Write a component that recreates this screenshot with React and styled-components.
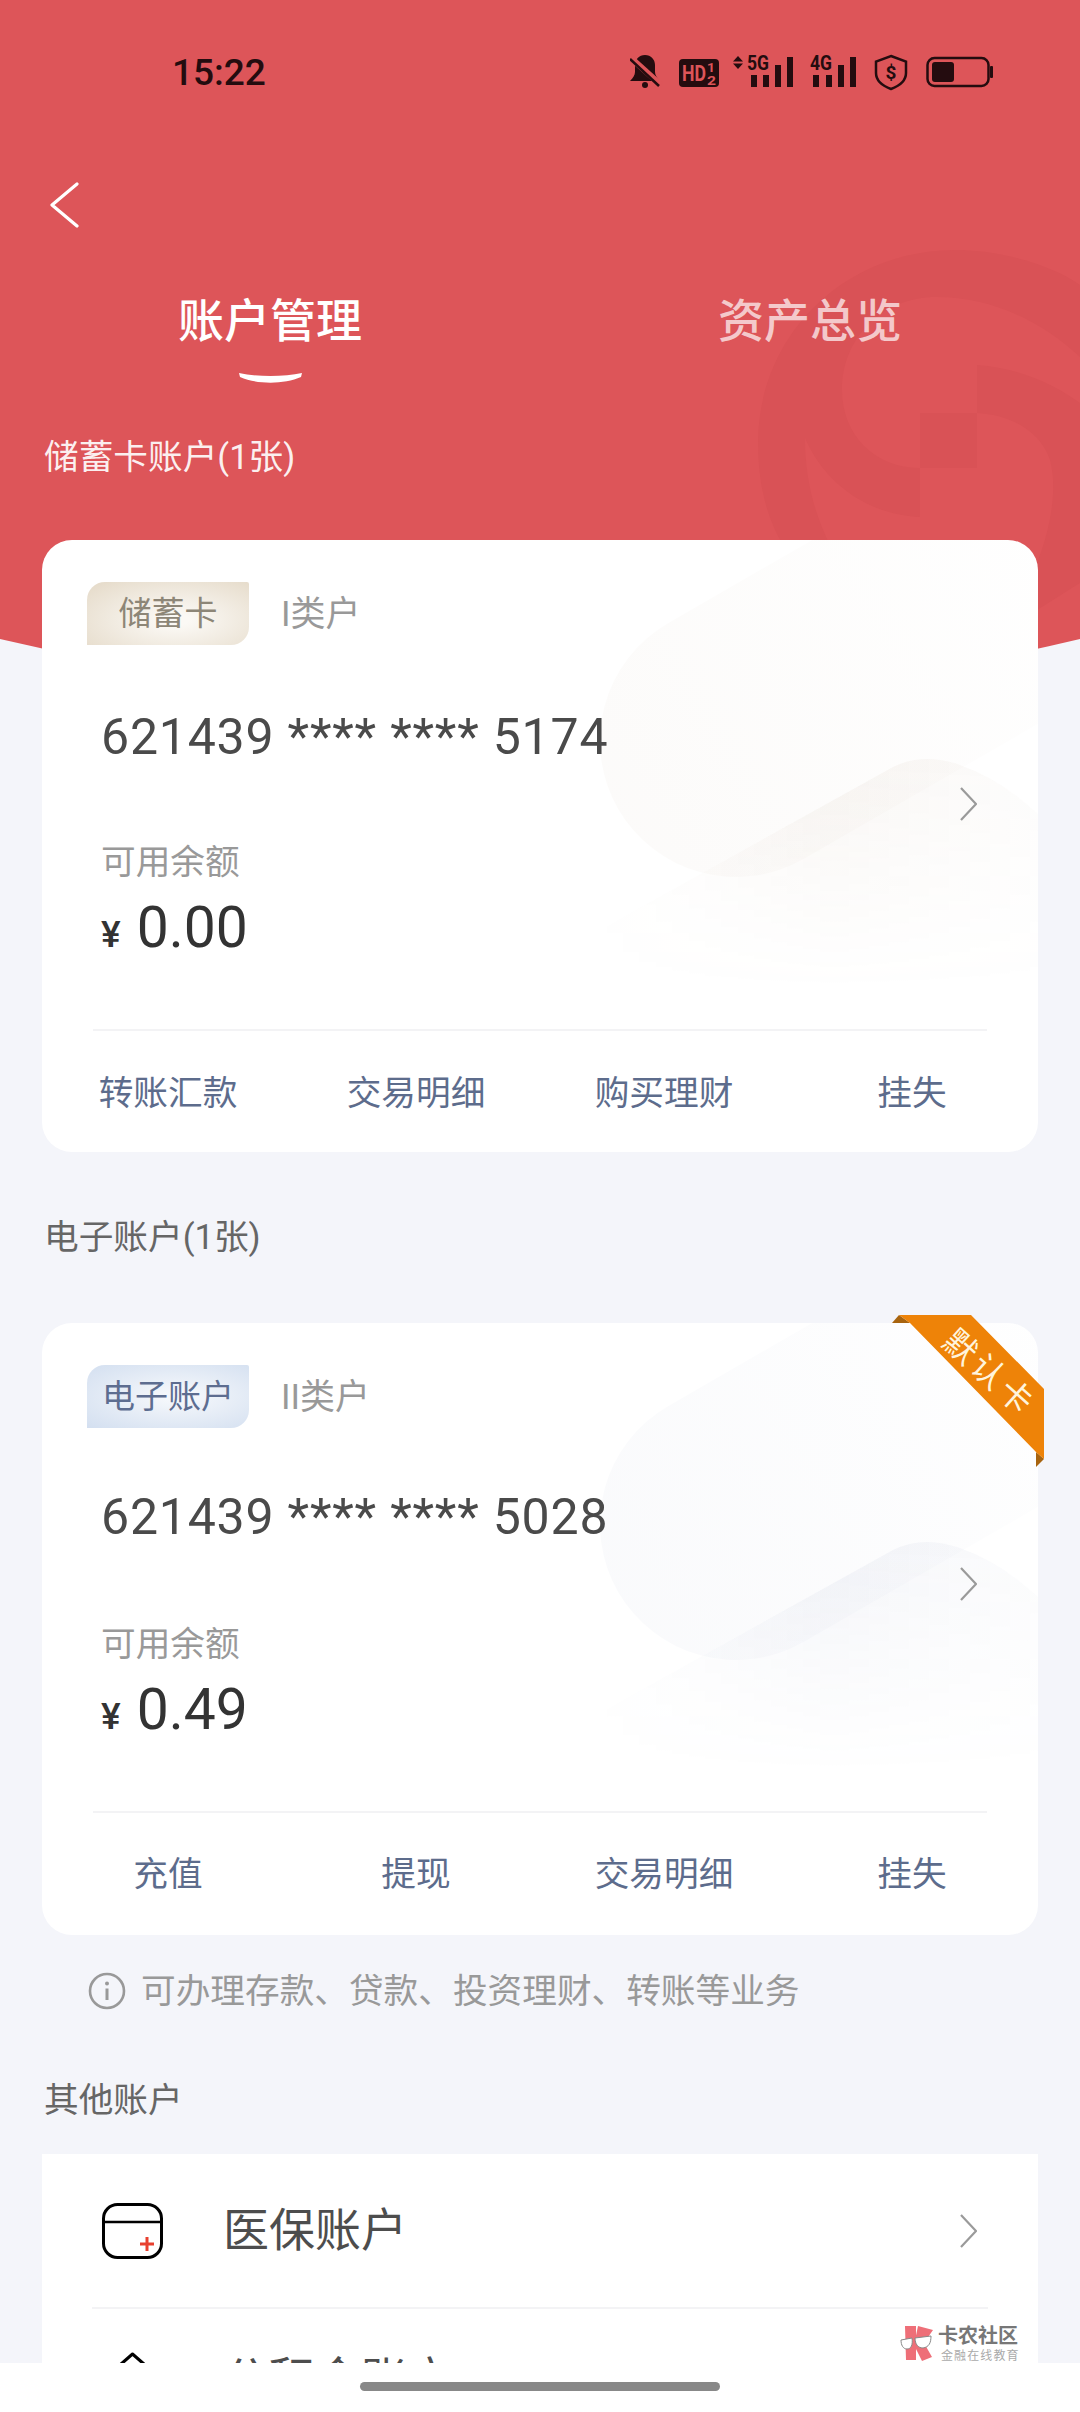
import React from "react";
import styled, {createGlobalStyle} from "styled-components";

const GlobalStyle = createGlobalStyle`
  html, body {
    margin: 0;
    padding: 0;
    background: #f4f5fa;
  }
  * {
    box-sizing: border-box;
  }
`;

const FONT = `Roboto, "Noto Sans CJK SC", sans-serif`;
const STATUS_INK = "#240c0f";
const RED = "#dd5559";
const RED_DARK = "#d95256";

const Screen = styled.div`
  position: relative;
  width: 1080px;
  height: 2412px;
  overflow: hidden;
  background: #f4f5fa;
  font-family: ${FONT};
`;

const Backdrop = styled.svg`
  position: absolute;
  top: 0;
  left: 0;
  width: 1080px;
  height: 720px;
`;

const Content = styled.div`
  position: relative;
  display: flex;
  flex-direction: column;
`;

const StatusBar = styled.div`
  display: flex;
  align-items: center;
  justify-content: space-between;
  height: 144px;
  padding: 0 87px 0 172px;
`;

const Clock = styled.span`
  font-size: 37px;
  font-weight: 500;
  color: ${STATUS_INK};
`;

const StatusIcons = styled.div`
  display: flex;
  align-items: center;
`;

const StatusIcon = styled.svg`
  display: block;
  height: 44px;
  flex: none;
`;

const NavBar = styled.div`
  display: flex;
  align-items: center;
  height: 122px;
  padding-left: 49px;
`;

const Tabs = styled.div`
  display: flex;
  height: 124px;
  padding-top: 24px;
`;

const Tab = styled.div`
  flex: 1;
  display: flex;
  flex-direction: column;
  align-items: center;
  gap: 20px;
  font-size: 46px;
  font-weight: 500;
  line-height: 62px;
  color: ${(p) => (p.$active ? "#ffffff" : "rgba(255, 255, 255, 0.7)")};
`;

const SectionTitle = styled.div`
  padding: ${(p) => p.$top}px 44px ${(p) => p.$bottom}px;
  font-size: 34.67px;
  line-height: 44px;
  color: ${(p) => (p.$light ? "rgba(255, 255, 255, 0.92)" : "#666666")};
`;

const Card = styled.div`
  position: relative;
  display: flex;
  flex-direction: column;
  height: 612px;
  margin: 0 42px;
  border-radius: 30px;
  background: #ffffff;
`;

const CardArt = styled.svg`
  position: absolute;
  top: 0;
  left: 0;
  width: 996px;
  height: 612px;
  border-radius: 30px;
`;

const TagRow = styled.div`
  position: relative;
  display: flex;
  align-items: center;
  gap: 32px;
  margin: 42px 0 0 45px;
`;

const Tag = styled.div`
  display: flex;
  align-items: center;
  justify-content: center;
  width: 162px;
  height: 63px;
  padding-bottom: 5px;
  border-radius: 18px 2px 18px 0;
  font-size: 33px;
  color: ${(p) => (p.$tone === "blue" ? "#5d6d90" : "#8d8677")};
  background: ${(p) =>
    p.$tone === "blue"
        ? "radial-gradient(ellipse at 55% 50%, #f4f7fb 10%, #d3dff0 100%)"
        : "radial-gradient(ellipse at 55% 60%, #fbf9f5 10%, #e4d9c7 100%)"};
`;

const TagNote = styled.span`
  padding-bottom: 6px;
  font-size: 35px;
  color: #999999;
`;

const CardBody = styled.div`
  position: relative;
  display: flex;
  align-items: center;
  justify-content: space-between;
  padding: 0 61px 0 59px;
`;

const CardInfo = styled.div`
  display: flex;
  flex-direction: column;
`;

const CardNumber = styled.div`
  margin-top: ${(p) => (p.$tight ? 59 : 62)}px;
  font-size: 50px;
  line-height: 60px;
  letter-spacing: 0.8px;
  color: #4a4a4a;
`;

const BalanceLabel = styled.div`
  margin-top: ${(p) => (p.$tight ? 75 : 73)}px;
  font-size: 34.67px;
  line-height: 44px;
  color: #999999;
`;

const Balance = styled.div`
  display: flex;
  align-items: baseline;
  gap: 16px;
  margin-top: 12px;
  font-size: 57px;
  line-height: 64px;
  color: #333333;
`;

const Currency = styled.span`
  font-size: 37px;
  font-weight: 500;
`;

const CardChevron = styled.div`
  display: flex;
  margin-bottom: ${(p) => (p.$tight ? 10 : 4)}px;
`;

const CardDivider = styled.div`
  position: relative;
  height: 2px;
  margin: 62px 51px 0;
  background: #f3f3f5;
`;

const Actions = styled.div`
  position: relative;
  flex: 1;
  display: grid;
  grid-template-columns: repeat(4, 1fr);
  align-items: center;
  padding: 0 2px ${(p) => (p.$tight ? 7 : 4)}px;
`;

const Action = styled.div`
  text-align: center;
  font-size: 34.67px;
  color: #5d6c8c;
`;

const Ribbon = styled.div`
  position: absolute;
  top: -8px;
  right: -6px;
  width: 152px;
  height: 152px;
`;

const RibbonShape = styled.svg`
  display: block;
`;

const RibbonText = styled.span`
  position: absolute;
  top: 28px;
  left: 44px;
  width: 92px;
  text-align: center;
  font-size: 33px;
  line-height: 48px;
  letter-spacing: 4px;
  white-space: nowrap;
  color: #fff4dc;
  transform: rotate(42deg);
`;

const Notice = styled.div`
  display: flex;
  align-items: center;
  gap: 14px;
  margin-top: 34px;
  padding-left: 87px;
  font-size: 34.67px;
  line-height: 44px;
  color: #999999;
`;

const Panel = styled.div`
  margin: 0 42px;
  background: #ffffff;
`;

const Row = styled.div`
  display: flex;
  align-items: center;
  height: ${(p) => p.$height}px;
  padding: 0 61px 0 60px;
`;

const RowLabel = styled.span`
  flex: 1;
  margin: 0 0 9px 60px;
  font-size: 46px;
  color: #4d4d4d;
`;

const RowDivider = styled.div`
  height: 2px;
  margin: 0 50px 0 50px;
  background: #f3f3f5;
`;

const HomeBar = styled.div`
  position: absolute;
  left: 0;
  right: 0;
  bottom: 0;
  display: flex;
  justify-content: center;
  height: 49px;
  padding-top: 19px;
  background: #ffffff;
`;

const HomeHandle = styled.div`
  width: 360px;
  height: 9px;
  border-radius: 5px;
  background: #888888;
`;

const Watermark = styled.div`
  position: absolute;
  left: 900px;
  top: 2325px;
  display: flex;
  gap: 4px;
`;

const WatermarkText = styled.div`
  display: flex;
  flex-direction: column;
  gap: 3px;
`;

const WatermarkName = styled.span`
  font-size: 20px;
  line-height: 22px;
  font-weight: 700;
  color: #777777;
`;

const WatermarkSlogan = styled.span`
  padding-left: 3px;
  font-size: 12px;
  line-height: 13px;
  letter-spacing: 1.1px;
  color: #aaaaaa;
`;

const Chevron = () => (
    <svg width="17" height="34" viewBox="0 0 17 34" fill="none">
        <path d="M1 1L16 17L1 33" stroke="#9a9a9a" strokeWidth="2.2"/>
    </svg>
);

const StatusGlyphs = () => (
    <StatusIcons>
        <StatusIcon viewBox="630 50 49 44" width="49">
            <path d="M645 55c-6 0-10 4.500-10 10v7c0 3-2 6-5 9h30c-3-3-5-6-5-9v-7c0-5.500-4-10-10-10z" fill={STATUS_INK}/>
            <circle cx="645" cy="85" r="3" fill={STATUS_INK}/>
            <path d="M631 58L661 85" stroke={RED} strokeWidth="6"/>
            <path d="M630 59L659 86" stroke={STATUS_INK} strokeWidth="2.5"/>
        </StatusIcon>
        <StatusIcon viewBox="679 50 54 44" width="54">
            <rect x="679" y="59" width="40" height="28" rx="4" fill={STATUS_INK}/>
            <text x="682" y="81" fontFamily="Roboto" fontWeight="700" fontSize="22" textLength="24" lengthAdjust="spacingAndGlyphs" fill={RED}>HD</text>
            <text x="707" y="72" fontFamily="Roboto" fontWeight="700" fontSize="13" textLength="8" lengthAdjust="spacingAndGlyphs" fill={RED}>1</text>
            <text x="707" y="85" fontFamily="Roboto" fontWeight="700" fontSize="13" textLength="9" lengthAdjust="spacingAndGlyphs" fill={RED}>2</text>
        </StatusIcon>
        <StatusIcon viewBox="733 50 77 44" width="77" fill={STATUS_INK}>
            <path d="M738 56L743 61.500H733Z"/>
            <path d="M738 69L743 63.500H733Z"/>
            <text x="747" y="70" fontFamily="Roboto" fontWeight="700" fontSize="20" textLength="22" lengthAdjust="spacingAndGlyphs">5G</text>
            <rect x="751" y="75" width="6" height="12"/>
            <rect x="763" y="75" width="6" height="12"/>
            <rect x="775" y="65" width="6" height="22"/>
            <rect x="787" y="57" width="6" height="30"/>
        </StatusIcon>
        <StatusIcon viewBox="810 50 64 44" width="64" fill={STATUS_INK}>
            <text x="810" y="70" fontFamily="Roboto" fontWeight="700" fontSize="20" textLength="22" lengthAdjust="spacingAndGlyphs">4G</text>
            <rect x="813" y="75" width="6" height="12"/>
            <rect x="826" y="75" width="6" height="12"/>
            <rect x="838" y="65" width="6" height="22"/>
            <rect x="850" y="57" width="6" height="30"/>
        </StatusIcon>
        <StatusIcon viewBox="874 50 52 44" width="52">
            <path d="M891 56L906 61.500V73C906 81 899 86 891 89C883 86 876 81 876 73V61.500Z" fill="none" stroke={STATUS_INK} strokeWidth="2.5"/>
            <text x="891" y="79" textAnchor="middle" fontFamily="Roboto" fontWeight="700" fontSize="19" fill={STATUS_INK}>$</text>
        </StatusIcon>
        <StatusIcon viewBox="926 50 67 44" width="67">
            <rect x="927.5" y="58" width="61" height="28" rx="7" fill="none" stroke={STATUS_INK} strokeWidth="2.5"/>
            <rect x="932" y="62" width="22" height="20" rx="3" fill={STATUS_INK}/>
            <rect x="990" y="66" width="3" height="12" rx="1" fill={STATUS_INK}/>
        </StatusIcon>
    </StatusIcons>
);

// red header with the bank mark pressed into it
const HeaderBackdrop = () => (
    <Backdrop viewBox="0 0 1080 720">
        <path d="M0 0H1080V639Q540 768 0 639Z" fill={RED}/>
        <g fill={RED_DARK}>
            <path d="M920 517C870 515 825 485 805 438C805 480 815 515 830 545H783C765 515 758 480 758 443C758 335 845 250 955 250C1010 250 1060 270 1080 285V357C1040 320 990 297 937 297C880 297 842 340 842 390C842 435 875 468 920 468Z"/>
            <path d="M920 413H977V468H920Z"/>
            <path d="M977 365C1020 368 1055 385 1080 403V583C1065 592 1050 602 1037 610V563C1050 530 1058 490 1050 460C1040 430 1010 415 977 413Z"/>
        </g>
    </Backdrop>
);

const CardDecoration = ({tone}) => {
    const rgb = tone === "blue" ? "70, 90, 150" : "150, 110, 70";
    const id = `fade-${tone}`;
    return (
        <CardArt viewBox="0 0 996 612">
            <defs>
                <linearGradient id={`${id}-pill`} x1="560" y1="300" x2="1000" y2="30" gradientUnits="userSpaceOnUse">
                    <stop offset="0" stopColor={`rgb(${rgb})`} stopOpacity="0.03"/>
                    <stop offset="1" stopColor={`rgb(${rgb})`} stopOpacity="0.004"/>
                </linearGradient>
                <linearGradient id={`${id}-wave`} x1="540" y1="0" x2="996" y2="0" gradientUnits="userSpaceOnUse">
                    <stop offset="0" stopColor={`rgb(${rgb})`} stopOpacity="0"/>
                    <stop offset="0.55" stopColor={`rgb(${rgb})`} stopOpacity="0.06"/>
                    <stop offset="1" stopColor={`rgb(${rgb})`} stopOpacity="0.02"/>
                </linearGradient>
                <linearGradient id={`${id}-drop`} x1="0" y1="222" x2="0" y2="450" gradientUnits="userSpaceOnUse">
                    <stop offset="0" stopColor="#ffffff"/>
                    <stop offset="1" stopColor="#000000"/>
                </linearGradient>
                <mask id={`${id}-mask`} maskUnits="userSpaceOnUse" x="0" y="0" width="996" height="612">
                    <rect x="0" y="200" width="996" height="260" fill={`url(#${id}-drop)`}/>
                </mask>
            </defs>
            <path d="M694 201L1190 -85" stroke={`url(#${id}-pill)`} strokeWidth="272" strokeLinecap="round" fill="none"/>
            <path d="M540 400L851 227Q881 212 918 225Q960 240 996 274V470H540Z" fill={`url(#${id}-wave)`} mask={`url(#${id}-mask)`}/>
        </CardArt>
    );
};

const DefaultRibbon = () => (
    <Ribbon>
        <RibbonShape width="152" height="152" viewBox="0 0 152 152">
            <path d="M0 8L7 0L18 8Z" fill="#a8640f"/>
            <path d="M144 137L152 144L144 152Z" fill="#a8640f"/>
            <path d="M7 0H79L152 74V144L144 137L18 8Z" fill="#ee8308"/>
        </RibbonShape>
        <RibbonText>默认卡</RibbonText>
    </Ribbon>
);

const AccountCard = ({tone, tag, note, number, balance, actions, tight, ribbon}) => (
    <Card>
        <CardDecoration tone={tone}/>
        <TagRow>
            <Tag $tone={tone}>{tag}</Tag>
            <TagNote>{note}</TagNote>
        </TagRow>
        <CardBody>
            <CardInfo>
                <CardNumber $tight={tight}>{number}</CardNumber>
                <BalanceLabel $tight={tight}>可用余额</BalanceLabel>
                <Balance>
                    <Currency>¥</Currency>
                    {balance}
                </Balance>
            </CardInfo>
            <CardChevron $tight={tight}>
                <Chevron/>
            </CardChevron>
        </CardBody>
        <CardDivider/>
        <Actions $tight={tight}>
            {actions.map((item) => <Action key={item}>{item}</Action>)}
        </Actions>
        {ribbon && <DefaultRibbon/>}
    </Card>
);

const InfoIcon = () => (
    <svg width="40" height="40" viewBox="0 0 40 40" fill="none">
        <circle cx="20" cy="20" r="17" stroke="#999999" strokeWidth="2.6"/>
        <circle cx="20" cy="12.500" r="2" fill="#999999"/>
        <path d="M20 17.500V29" stroke="#999999" strokeWidth="3"/>
    </svg>
);

const MedicalIcon = () => (
    <svg width="61" height="56" viewBox="0 0 61 56" fill="none">
        <rect x="1.5" y="1.5" width="58" height="53" rx="14" stroke="#000000" strokeWidth="3"/>
        <path d="M2 19H59" stroke="#000000" strokeWidth="2.5"/>
        <path d="M45 34V48M38 41H52" stroke="#e8402f" strokeWidth="3"/>
    </svg>
);

const HouseIcon = () => (
    <svg width="61" height="56" viewBox="0 0 61 56" fill="none">
        <path d="M2 27L30.5 2L59 27V54H2Z" stroke="#000000" strokeWidth="3" strokeLinejoin="round"/>
    </svg>
);

const WatermarkMark = () => (
    <svg width="34" height="36" viewBox="0 0 34 36">
        <path d="M5 1H16V35H6Z" fill="#ee6f78"/>
        <path d="M18 1L33 5L24 18L32 32L22 36L14 20Z" fill="#ee6f78"/>
        <path d="M1 15L12 13C13 20 11 24 7 24C3 24 1 20 1 15Z" fill="#ffffff" stroke="#888888" strokeWidth="1"/>
        <path d="M15 13L31 11C31 18 29 22 23 23C18 23 15 19 15 13Z" fill="#ffffff" stroke="#888888" strokeWidth="1"/>
    </svg>
);

export default function App() {
    return (
        <Screen>
            <GlobalStyle/>
            <HeaderBackdrop/>
            <Content>
                <StatusBar>
                    <Clock>15:22</Clock>
                    <StatusGlyphs/>
                </StatusBar>
                <NavBar>
                    <svg width="30" height="46" viewBox="0 0 30 46" fill="none">
                        <path d="M28 2L3 23L28 44" stroke="#ffffff" strokeWidth="3.2" strokeLinecap="round" strokeLinejoin="round"/>
                    </svg>
                </NavBar>
                <Tabs>
                    <Tab $active>
                        账户管理
                        <svg width="63" height="11" viewBox="0 0 63 11">
                            <path d="M0 1C18 5 45 5 63 1L62 5C45 12.500 18 12.500 1 5Z" fill="#ffffff"/>
                        </svg>
                    </Tab>
                    <Tab>资产总览</Tab>
                </Tabs>
                <SectionTitle $light $top={45} $bottom={61}>储蓄卡账户(1张)</SectionTitle>
                <AccountCard
                    tone="gold"
                    tag="储蓄卡"
                    note="I类户"
                    number="621439 **** **** 5174"
                    balance="0.00"
                    actions={["转账汇款", "交易明细", "购买理财", "挂失"]}
                />
                <SectionTitle $top={63} $bottom={64}>电子账户(1张)</SectionTitle>
                <AccountCard
                    tight
                    ribbon
                    tone="blue"
                    tag="电子账户"
                    note="II类户"
                    number="621439 **** **** 5028"
                    balance="0.49"
                    actions={["充值", "提现", "交易明细", "挂失"]}
                />
                <Notice>
                    <InfoIcon/>
                    可办理存款、贷款、投资理财、转账等业务
                </Notice>
                <SectionTitle $top={65} $bottom={32}>其他账户</SectionTitle>
                <Panel>
                    <Row $height={153}>
                        <MedicalIcon/>
                        <RowLabel>医保账户</RowLabel>
                        <Chevron/>
                    </Row>
                    <RowDivider/>
                    <Row $height={141}>
                        <HouseIcon/>
                        <RowLabel>公积金账户</RowLabel>
                        <Chevron/>
                    </Row>
                </Panel>
            </Content>
            <Watermark>
                <WatermarkMark/>
                <WatermarkText>
                    <WatermarkName>卡农社区</WatermarkName>
                    <WatermarkSlogan>金融在线教育</WatermarkSlogan>
                </WatermarkText>
            </Watermark>
            <HomeBar>
                <HomeHandle/>
            </HomeBar>
        </Screen>
    );
}
